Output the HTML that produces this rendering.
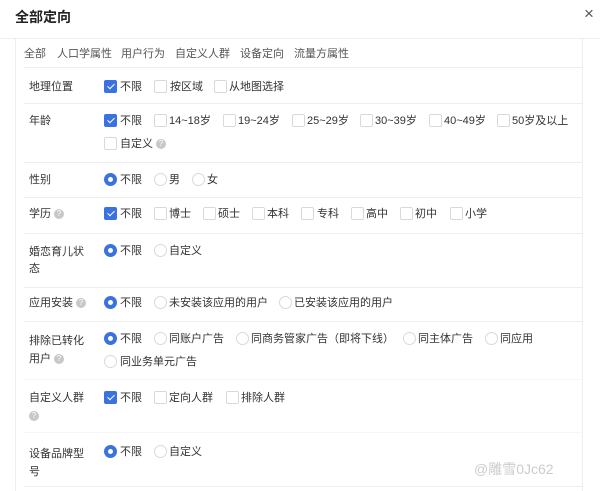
<!DOCTYPE html>
<html><head><meta charset="utf-8"><style>
*{margin:0;padding:0;box-sizing:border-box}
body{width:600px;height:491px;background:#fff;font-family:"Liberation Sans","Noto Sans CJK SC",sans-serif;font-size:11px;color:#333;position:relative;overflow:hidden}
.a{position:absolute;white-space:nowrap;line-height:14px}
.t{position:absolute;white-space:nowrap;line-height:14px}
.cb{position:absolute;width:13px;height:13px;border:1px solid #d9d9d9;border-radius:2px;background:#fff}
.cb.on{background:#3a72e0;border-color:#3a72e0}
.cb.on:after{content:"";position:absolute;left:3.5px;top:1px;width:3px;height:6px;border:solid #fff;border-width:0 1.6px 1.6px 0;transform:rotate(45deg)}
.rd{position:absolute;width:13px;height:13px;border:1px solid #d9d9d9;border-radius:50%;background:#fff}
.rd.on{border:4px solid #3a72e0}
.q{display:inline-block;width:10px;height:10px;border-radius:50%;background:#c8c8c8;color:#fff;font-size:8px;line-height:10px;text-align:center;vertical-align:middle;margin-left:3px}
.hl{position:absolute;left:24px;width:558px;height:1px;background:#eee}
</style></head><body>
<div class="a" style="left:15px;top:8px;font-size:14px;line-height:18px;font-weight:bold;color:#222">全部定向</div>
<div class="a" style="left:584px;top:7px;font-size:17px;color:#555">×</div>
<div style="position:absolute;left:0;top:38px;width:600px;height:1px;background:#eee"></div>
<div style="position:absolute;left:15px;top:39px;width:1px;height:452px;background:#eee"></div>
<div style="position:absolute;left:582px;top:39px;width:1px;height:452px;background:#eee"></div>
<div class="a" style="left:24px;top:47px;color:#555">全部</div>
<div class="a" style="left:57px;top:47px;color:#555">人口学属性</div>
<div class="a" style="left:121px;top:47px;color:#555">用户行为</div>
<div class="a" style="left:175px;top:47px;color:#555">自定义人群</div>
<div class="a" style="left:240px;top:47px;color:#555">设备定向</div>
<div class="a" style="left:294px;top:47px;color:#555">流量方属性</div>
<div class="hl" style="top:67px"></div>

<div class="a" style="left:29px;top:80px">地理位置</div>
<div class="cb on" style="left:104px;top:80px"></div><div class="t" style="left:120px;top:80px">不限</div>
<div class="cb" style="left:154px;top:80px"></div><div class="t" style="left:170px;top:80px">按区域</div>
<div class="cb" style="left:214px;top:80px"></div><div class="t" style="left:229px;top:80px">从地图选择</div>
<div class="hl" style="top:103px"></div>

<div class="a" style="left:29px;top:114px">年龄</div>
<div class="cb on" style="left:104px;top:114px"></div><div class="t" style="left:120px;top:114px">不限</div>
<div class="cb" style="left:154px;top:114px"></div><div class="t" style="left:169px;top:114px">14~18岁</div>
<div class="cb" style="left:223px;top:114px"></div><div class="t" style="left:238px;top:114px">19~24岁</div>
<div class="cb" style="left:292px;top:114px"></div><div class="t" style="left:307px;top:114px">25~29岁</div>
<div class="cb" style="left:360px;top:114px"></div><div class="t" style="left:375px;top:114px">30~39岁</div>
<div class="cb" style="left:429px;top:114px"></div><div class="t" style="left:444px;top:114px">40~49岁</div>
<div class="cb" style="left:497px;top:114px"></div><div class="t" style="left:512px;top:114px">50岁及以上</div>
<div class="cb" style="left:104px;top:137px"></div><div class="t" style="left:120px;top:137px">自定义<span class="q">?</span></div>
<div class="hl" style="top:162px"></div>

<div class="a" style="left:29px;top:173px">性别</div>
<div class="rd on" style="left:104px;top:173px"></div><div class="t" style="left:120px;top:173px">不限</div>
<div class="rd" style="left:154px;top:173px"></div><div class="t" style="left:169px;top:173px">男</div>
<div class="rd" style="left:192px;top:173px"></div><div class="t" style="left:207px;top:173px">女</div>
<div class="hl" style="top:197px"></div>

<div class="a" style="left:29px;top:207px">学历<span class="q">?</span></div>
<div class="cb on" style="left:104px;top:207px"></div><div class="t" style="left:120px;top:207px">不限</div>
<div class="cb" style="left:154px;top:207px"></div><div class="t" style="left:169px;top:207px">博士</div>
<div class="cb" style="left:203px;top:207px"></div><div class="t" style="left:218px;top:207px">硕士</div>
<div class="cb" style="left:252px;top:207px"></div><div class="t" style="left:267px;top:207px">本科</div>
<div class="cb" style="left:301px;top:207px"></div><div class="t" style="left:317px;top:207px">专科</div>
<div class="cb" style="left:351px;top:207px"></div><div class="t" style="left:366px;top:207px">高中</div>
<div class="cb" style="left:400px;top:207px"></div><div class="t" style="left:415px;top:207px">初中</div>
<div class="cb" style="left:450px;top:207px"></div><div class="t" style="left:465px;top:207px">小学</div>
<div class="hl" style="top:233px"></div>

<div class="a" style="left:29px;top:244px;line-height:17px">婚恋育儿状<br>态</div>
<div class="rd on" style="left:104px;top:244px"></div><div class="t" style="left:120px;top:244px">不限</div>
<div class="rd" style="left:154px;top:244px"></div><div class="t" style="left:169px;top:244px">自定义</div>
<div class="hl" style="top:287px"></div>

<div class="a" style="left:29px;top:296px">应用安装<span class="q">?</span></div>
<div class="rd on" style="left:104px;top:296px"></div><div class="t" style="left:120px;top:296px">不限</div>
<div class="rd" style="left:154px;top:296px"></div><div class="t" style="left:169px;top:296px">未安装该应用的用户</div>
<div class="rd" style="left:279px;top:296px"></div><div class="t" style="left:294px;top:296px">已安装该应用的用户</div>
<div class="hl" style="top:321px"></div>

<div class="a" style="left:29px;top:332px;line-height:18px">排除已转化<br>用户<span class="q">?</span></div>
<div class="rd on" style="left:104px;top:332px"></div><div class="t" style="left:120px;top:332px">不限</div>
<div class="rd" style="left:154px;top:332px"></div><div class="t" style="left:169px;top:332px">同账户广告</div>
<div class="rd" style="left:236px;top:332px"></div><div class="t" style="left:251px;top:332px">同商务管家广告（即将下线）</div>
<div class="rd" style="left:403px;top:332px"></div><div class="t" style="left:418px;top:332px">同主体广告</div>
<div class="rd" style="left:485px;top:332px"></div><div class="t" style="left:500px;top:332px">同应用</div>
<div class="rd" style="left:104px;top:355px"></div><div class="t" style="left:120px;top:355px">同业务单元广告</div>
<div class="hl" style="top:379px;background:#f6f6f6"></div>

<div class="a" style="left:29px;top:391px">自定义人群</div>
<div class="a" style="left:29px;top:409px"><span class="q" style="margin:0">?</span></div>
<div class="cb on" style="left:104px;top:391px"></div><div class="t" style="left:120px;top:391px">不限</div>
<div class="cb" style="left:154px;top:391px"></div><div class="t" style="left:169px;top:391px">定向人群</div>
<div class="cb" style="left:226px;top:391px"></div><div class="t" style="left:241px;top:391px">排除人群</div>
<div class="hl" style="top:432px;background:#f6f6f6"></div>

<div class="a" style="left:29px;top:445px;line-height:18px">设备品牌型<br>号</div>
<div class="rd on" style="left:104px;top:445px"></div><div class="t" style="left:120px;top:445px">不限</div>
<div class="rd" style="left:154px;top:445px"></div><div class="t" style="left:169px;top:445px">自定义</div>
<div class="a" style="left:474px;top:460px;font-size:14px;line-height:18px;color:#ccc">@雕雪0Jc62</div>
<div class="hl" style="top:486px"></div>
</body></html>
